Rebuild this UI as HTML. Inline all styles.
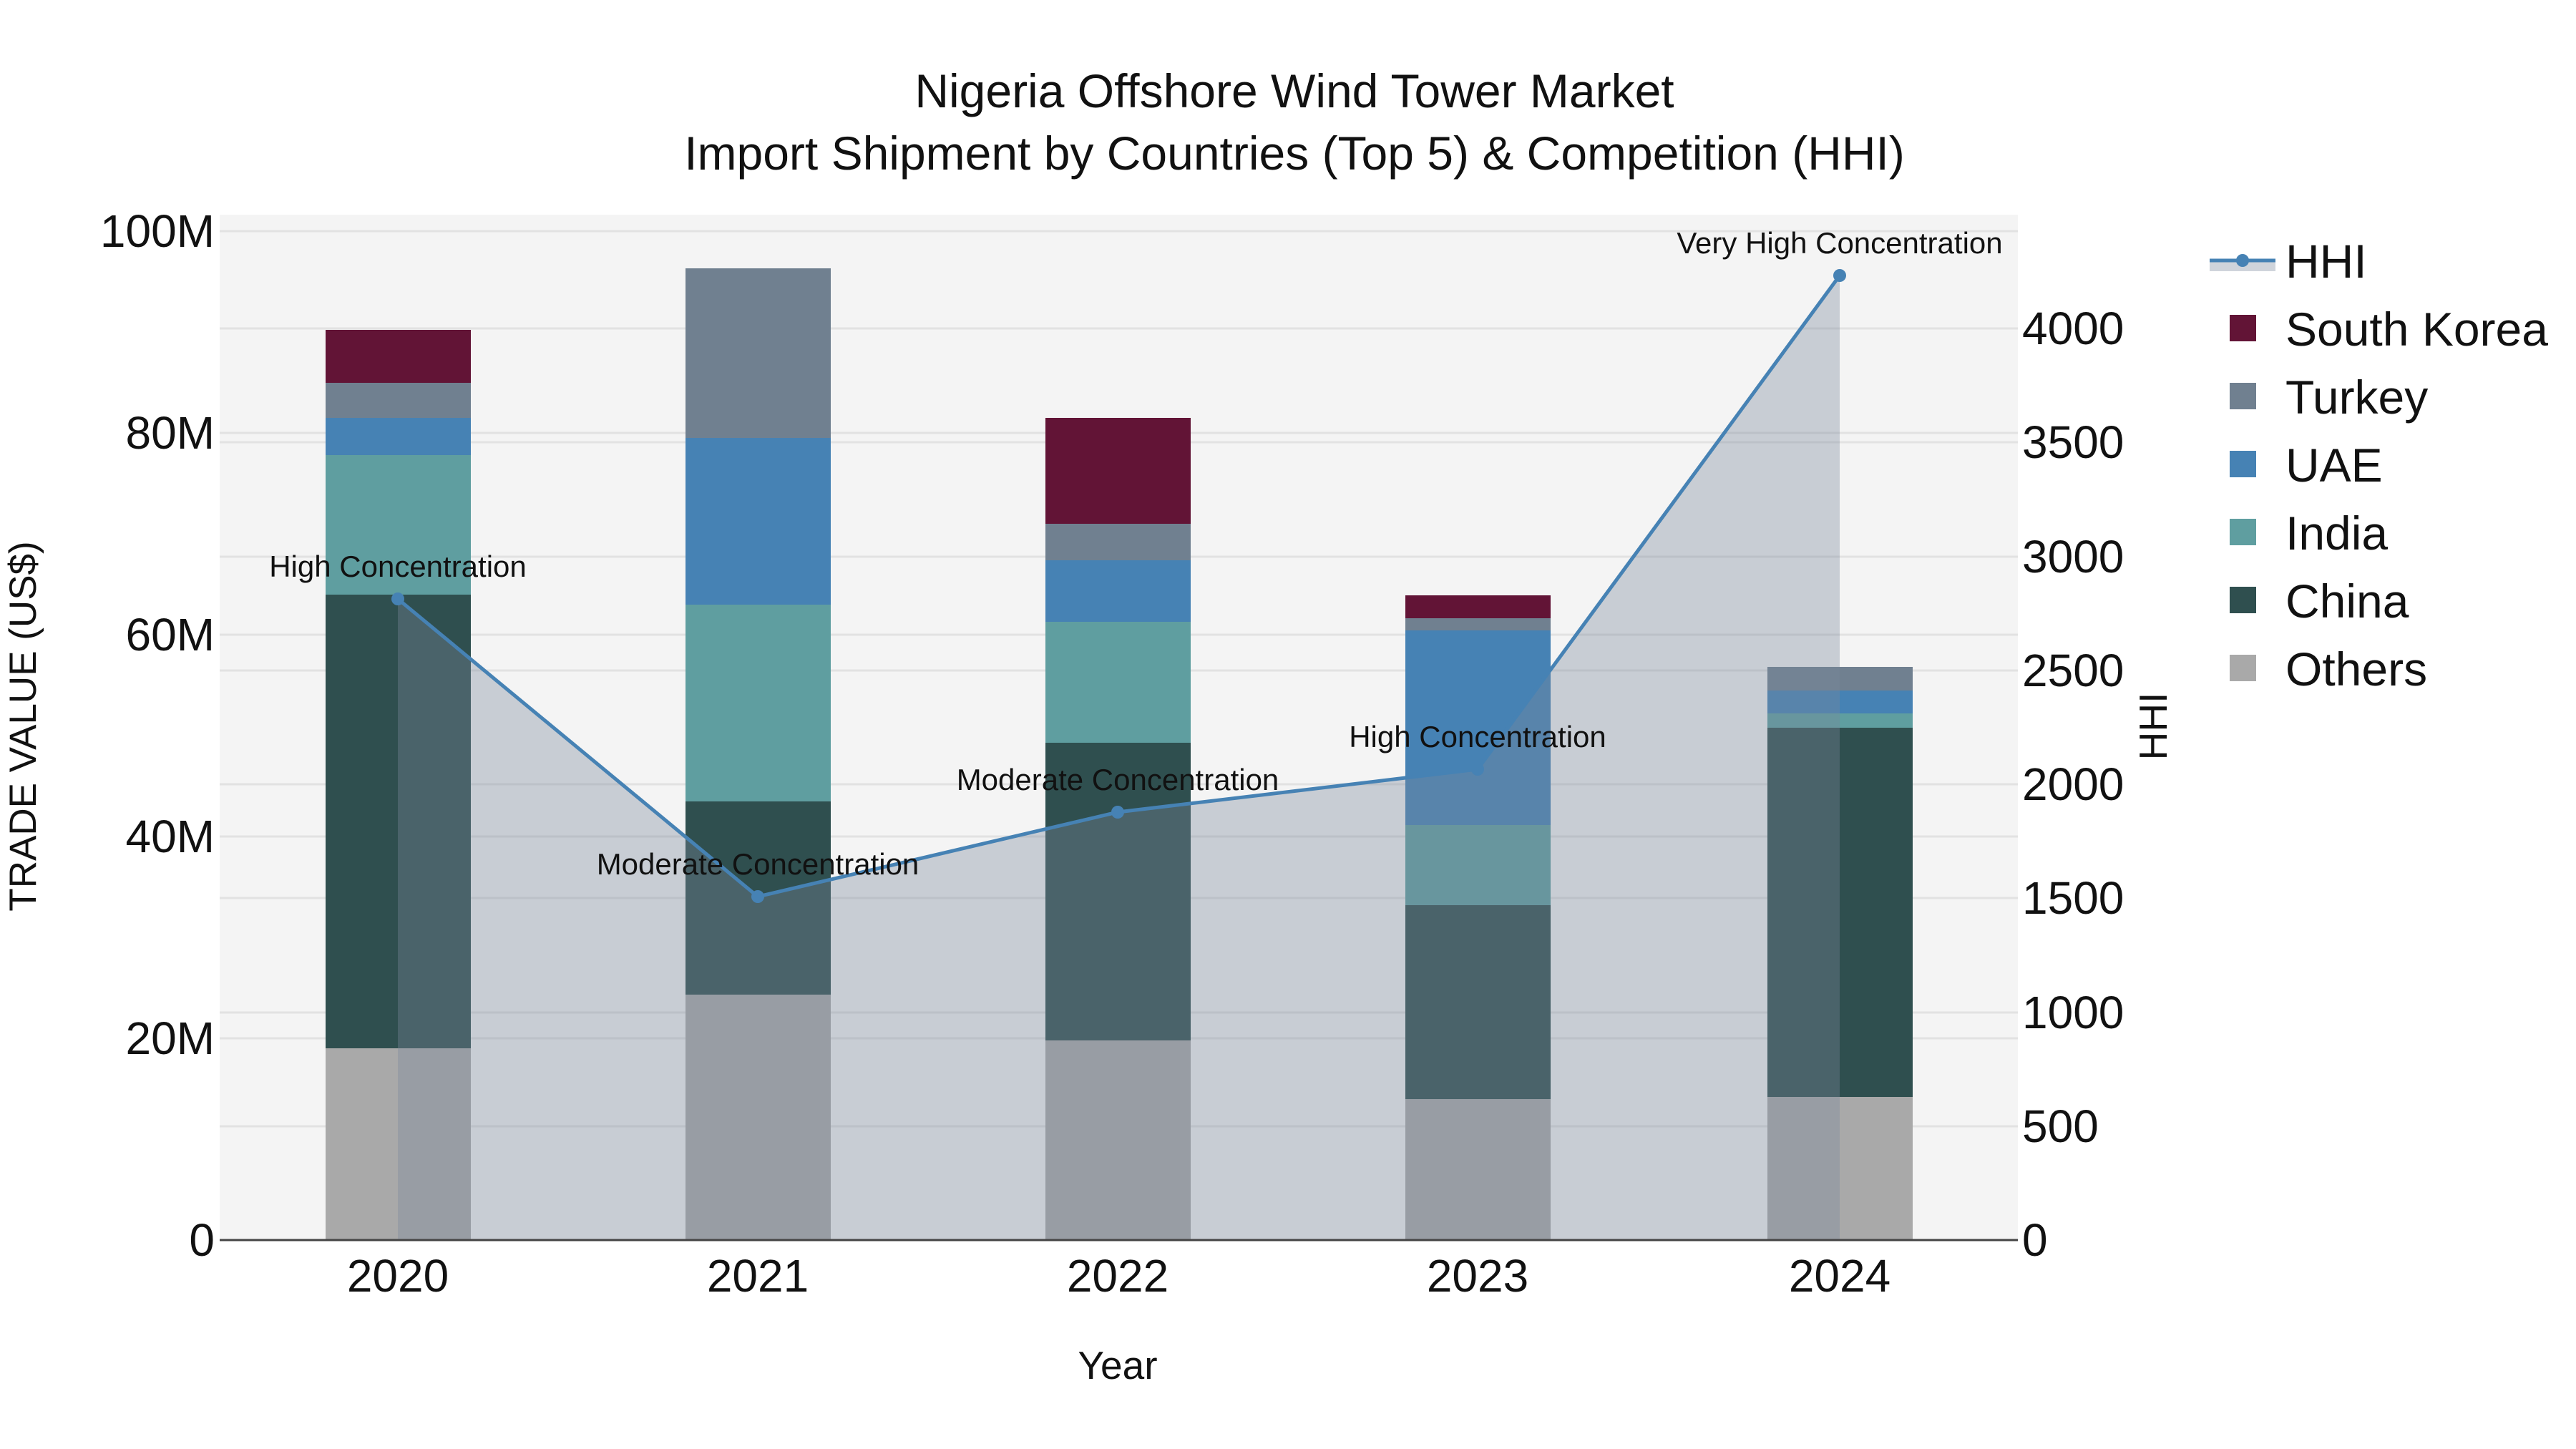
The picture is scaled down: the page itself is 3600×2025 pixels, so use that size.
<!DOCTYPE html>
<html><head><meta charset="utf-8"><style>
html,body{margin:0;padding:0;background:#fff;}
svg{display:block;font-family:"Liberation Sans",Arial,sans-serif;}
</style></head><body>
<svg width="3600" height="2025" viewBox="0 0 3600 2025" xmlns="http://www.w3.org/2000/svg">
<rect x="0" y="0" width="3600" height="2025" fill="#fff"/>
<rect x="307" y="300" width="2513" height="1433" fill="#f4f4f4"/>
<g stroke="#e2e2e2" stroke-width="3">
<line x1="307" x2="2820" y1="1451" y2="1451"/><line x1="307" x2="2820" y1="1169" y2="1169"/>
<line x1="307" x2="2820" y1="887" y2="887"/><line x1="307" x2="2820" y1="605" y2="605"/>
<line x1="307" x2="2820" y1="323" y2="323"/>
<line x1="307" x2="2820" y1="1574" y2="1574"/><line x1="307" x2="2820" y1="1415" y2="1415"/>
<line x1="307" x2="2820" y1="1255" y2="1255"/><line x1="307" x2="2820" y1="1096" y2="1096"/>
<line x1="307" x2="2820" y1="937" y2="937"/><line x1="307" x2="2820" y1="778" y2="778"/>
<line x1="307" x2="2820" y1="618" y2="618"/><line x1="307" x2="2820" y1="459" y2="459"/>
</g>
<g>
<rect x="455" y="461" width="203" height="74" fill="#621436"/>
<rect x="455" y="535" width="203" height="49" fill="#708090"/>
<rect x="455" y="584" width="203" height="52" fill="#4682b4"/>
<rect x="455" y="636" width="203" height="195" fill="#5f9ea0"/>
<rect x="455" y="831" width="203" height="634" fill="#2f4f4f"/>
<rect x="455" y="1465" width="203" height="268" fill="#a9a9a9"/>

<rect x="958" y="375" width="203" height="237" fill="#708090"/>
<rect x="958" y="612" width="203" height="233" fill="#4682b4"/>
<rect x="958" y="845" width="203" height="275" fill="#5f9ea0"/>
<rect x="958" y="1120" width="203" height="270" fill="#2f4f4f"/>
<rect x="958" y="1390" width="203" height="343" fill="#a9a9a9"/>

<rect x="1461" y="584" width="203" height="148" fill="#621436"/>
<rect x="1461" y="732" width="203" height="51" fill="#708090"/>
<rect x="1461" y="783" width="203" height="86" fill="#4682b4"/>
<rect x="1461" y="869" width="203" height="169" fill="#5f9ea0"/>
<rect x="1461" y="1038" width="203" height="416" fill="#2f4f4f"/>
<rect x="1461" y="1454" width="203" height="279" fill="#a9a9a9"/>

<rect x="1964" y="832" width="203" height="32" fill="#621436"/>
<rect x="1964" y="864" width="203" height="17" fill="#708090"/>
<rect x="1964" y="881" width="203" height="272" fill="#4682b4"/>
<rect x="1964" y="1153" width="203" height="112" fill="#5f9ea0"/>
<rect x="1964" y="1265" width="203" height="271" fill="#2f4f4f"/>
<rect x="1964" y="1536" width="203" height="197" fill="#a9a9a9"/>

<rect x="2470" y="932" width="203" height="33" fill="#708090"/>
<rect x="2470" y="965" width="203" height="32" fill="#4682b4"/>
<rect x="2470" y="997" width="203" height="20" fill="#5f9ea0"/>
<rect x="2470" y="1017" width="203" height="516" fill="#2f4f4f"/>
<rect x="2470" y="1533" width="203" height="200" fill="#a9a9a9"/>
</g>
<polygon points="556,837 1059,1253 1562,1135 2065,1075 2571,385 2571,1733 556,1733" fill="rgb(122,136,155)" fill-opacity="0.36"/>
<line x1="307" x2="2820" y1="1733" y2="1733" stroke="#444" stroke-width="3"/>
<polyline points="556,837 1059,1253 1562,1135 2065,1075 2571,385" fill="none" stroke="#4682b4" stroke-width="5"/>
<g fill="#4682b4">
<circle cx="556" cy="837" r="9"/><circle cx="1059" cy="1253" r="9"/><circle cx="1562" cy="1135" r="9"/><circle cx="2065" cy="1075" r="9"/><circle cx="2571" cy="385" r="9"/>
</g>
<g font-size="42" fill="#111" text-anchor="middle">
<text x="556" y="806">High Concentration</text>
<text x="1059" y="1222">Moderate Concentration</text>
<text x="1562" y="1104">Moderate Concentration</text>
<text x="2065" y="1044">High Concentration</text>
<text x="2571" y="354">Very High Concentration</text>
</g>
<g font-size="66" fill="#111" text-anchor="middle">
<text x="1809" y="150">Nigeria Offshore Wind Tower Market</text>
<text x="1809" y="237">Import Shipment by Countries (Top 5) &amp; Competition (HHI)</text>
</g>
<g font-size="64" fill="#111" text-anchor="end">
<text x="300" y="1755">0</text><text x="300" y="1473">20M</text><text x="300" y="1191">40M</text>
<text x="300" y="909">60M</text><text x="300" y="627">80M</text><text x="300" y="345">100M</text>
</g>
<g font-size="64" fill="#111" text-anchor="start">
<text x="2826" y="1755">0</text><text x="2826" y="1596">500</text><text x="2826" y="1437">1000</text>
<text x="2826" y="1277">1500</text><text x="2826" y="1118">2000</text><text x="2826" y="959">2500</text>
<text x="2826" y="800">3000</text><text x="2826" y="640">3500</text><text x="2826" y="481">4000</text>
</g>
<g font-size="64" fill="#111" text-anchor="middle">
<text x="556" y="1805">2020</text><text x="1059" y="1805">2021</text><text x="1562" y="1805">2022</text>
<text x="2065" y="1805">2023</text><text x="2571" y="1805">2024</text>
</g>
<text x="1562" y="1927" font-size="55" fill="#111" text-anchor="middle">Year</text>
<text transform="translate(50,1015) rotate(-90)" font-size="53" fill="#111" text-anchor="middle">TRADE VALUE (US$)</text>
<text transform="translate(3028,1015) rotate(-90)" font-size="55" fill="#111" text-anchor="middle">HHI</text>
<rect x="3088" y="365" width="92" height="14" fill="rgb(122,136,155)" fill-opacity="0.36"/>
<line x1="3088" x2="3180" y1="364" y2="364" stroke="#4682b4" stroke-width="5"/>
<circle cx="3134" cy="364" r="9" fill="#4682b4"/>
<rect x="3116" y="440" width="37" height="37" fill="#621436"/>
<rect x="3116" y="535" width="37" height="37" fill="#708090"/>
<rect x="3116" y="630" width="37" height="37" fill="#4682b4"/>
<rect x="3116" y="725" width="37" height="37" fill="#5f9ea0"/>
<rect x="3116" y="820" width="37" height="37" fill="#2f4f4f"/>
<rect x="3116" y="915" width="37" height="37" fill="#a9a9a9"/>
<g font-size="66" fill="#111">
<text x="3194" y="388">HHI</text>
<text x="3194" y="483">South Korea</text>
<text x="3194" y="578">Turkey</text>
<text x="3194" y="673">UAE</text>
<text x="3194" y="768">India</text>
<text x="3194" y="863">China</text>
<text x="3194" y="958">Others</text>
</g>
</svg>
</body></html>
